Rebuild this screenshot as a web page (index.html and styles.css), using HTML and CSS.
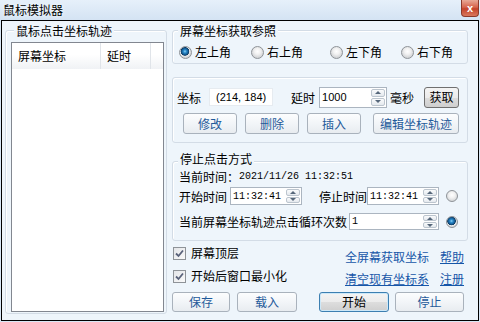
FILE: index.html
```html
<!DOCTYPE html>
<html lang="zh-CN">
<head>
<meta charset="utf-8">
<title>鼠标模拟器</title>
<link rel="stylesheet" href="styles.css">
</head>
<body>
<div class="titlebar">
  <span class="title">鼠标模拟器</span>
  <span class="close">x</span>
</div>
<div class="client">
  <div class="group left-group">
    <div class="legend">鼠标点击坐标轨迹</div>
    <div class="list">
      <div class="list-head">
        <div class="col c1">屏幕坐标</div>
        <div class="col c2">延时</div>
        <div class="col c3"></div>
      </div>
    </div>
  </div>

  <div class="right">
    <div class="group g-ref">
      <div class="legend">屏幕坐标获取参照</div>
      <div class="radios">
        <label class="opt"><span class="radio on"></span>左上角</label>
        <label class="opt"><span class="radio"></span>右上角</label>
        <label class="opt"><span class="radio"></span>左下角</label>
        <label class="opt"><span class="radio"></span>右下角</label>
      </div>
    </div>

    <div class="group g-coord">
      <div class="r1">
        <span>坐标</span>
        <span class="xy">(214, 184)</span>
        <span class="lbl-delay">延时</span>
        <span class="field delay"><span class="val">1000</span><span class="spin"><i class="up"></i><i class="dn"></i></span></span>
        <span class="lbl-ms">毫秒</span>
        <button class="btn get">获取</button>
      </div>
      <div class="r2">
        <button class="btn b-edit1">修改</button>
        <button class="btn b-del">删除</button>
        <button class="btn b-ins">插入</button>
        <button class="btn b-track">编辑坐标轨迹</button>
      </div>
    </div>

    <div class="group g-stop">
      <div class="legend">停止点击方式</div>
      <div class="s1"><span>当前时间：</span><span class="mono now">2021/11/26 11:32:51</span></div>
      <div class="s2">
        <span>开始时间</span>
        <span class="field time t-start"><span class="val mono">11:32:41</span><span class="spin"><i class="up"></i><i class="dn"></i></span></span>
        <span class="lbl-stop">停止时间</span>
        <span class="field time"><span class="val mono">11:32:41</span><span class="spin"><i class="up"></i><i class="dn"></i></span></span>
        <span class="radio r-end"></span>
      </div>
      <div class="s3">
        <span>当前屏幕坐标轨迹点击循环次数</span>
        <span class="field count"><span class="val mono">1</span><span class="spin"><i class="up"></i><i class="dn"></i></span></span>
        <span class="radio on r-end"></span>
      </div>
    </div>

    <div class="opts">
      <div class="checks">
        <label class="chk"><span class="cbox"><svg width="11" height="11" viewBox="0 0 11 11"><path d="M2 5.5 L4.5 8 L9 2.5" fill="none" stroke="#59627a" stroke-width="1.8"/></svg></span>屏幕顶层</label>
        <label class="chk"><span class="cbox"><svg width="11" height="11" viewBox="0 0 11 11"><path d="M2 5.5 L4.5 8 L9 2.5" fill="none" stroke="#59627a" stroke-width="1.8"/></svg></span>开始后窗口最小化</label>
      </div>
      <div class="links">
        <a class="lnk">全屏幕获取坐标</a>
        <a class="lnk u">帮助</a>
        <a class="lnk u">清空现有坐标系</a>
        <a class="lnk u">注册</a>
      </div>
    </div>

    <div class="actions">
      <button class="btn b-save">保存</button>
      <button class="btn b-load">载入</button>
      <button class="btn b-start">开始</button>
      <button class="btn b-stop">停止</button>
    </div>
  </div>
</div>
</body>
</html>
```

FILE: styles.css
```css
* { box-sizing: border-box; }
html, body { margin: 0; padding: 0; }
body {
  width: 480px;
  height: 322px;
  overflow: hidden;
  background: #d9e7f5;
  font-family: "Noto Sans CJK SC", "Noto Sans", sans-serif;
  font-size: 12px;
  color: #000;
}

.titlebar {
  height: 20px;
  display: flex;
  align-items: flex-start;
  padding-left: 3px;
  background: linear-gradient(#e6f0fa, #d4e3f3);
}
.title { line-height: 20px; text-shadow: 0 0 4px #fff; }
.close {
  margin-left: auto;
  margin-right: 1px;
  width: 18px;
  height: 17px;
  display: flex;
  align-items: center;
  justify-content: center;
  border: 1px solid #8d3a2a;
  border-top: 0;
  border-radius: 0 0 4px 4px;
  background: linear-gradient(#e9a996, #d7644c 45%, #c4432a 55%, #d9775c);
  color: #fff;
  font: bold 11px "Liberation Sans", sans-serif;
  line-height: 1;
}

.client {
  height: 301px;
  margin: 0 1px;
  border: 1px solid #000;
  background: #eef5fb;
  display: flex;
  align-items: flex-start;
}

.group {
  border: 1px solid #d3dce6;
  border-radius: 3px;
  box-shadow: inset 1px 1px 0 #fff;
}
.legend {
  width: fit-content;
  padding: 0 2px;
  background: #eef5fb;
  line-height: 14px;
  margin-top: -7px;
  margin-left: 5px;
}

/* left list group */
.left-group {
  margin: 9px 0 0 3px;
  width: 162px;
  height: 284px;
}
.left-group .legend { margin-left: 8px; }
.list {
  margin: 4px 0 0 5px;
  width: 153px;
  height: 270px;
  border: 1px solid #828790;
  background: #fff;
}
.list-head {
  display: flex;
  height: 26px;
  background: linear-gradient(#fff 0, #fff 45%, #f0f2f5 100%);
}
.col {
  line-height: 25px;
  padding-left: 6px;
  border-right: 1px solid #e0e4e9;
}
.c1 { width: 89px; }
.c2 { width: 50px; }
.c3 { flex: 1; border-right: 0; }

/* right column */
.right {
  margin-left: 5px;
  width: 296px;
  display: flex;
  flex-direction: column;
}

.g-ref { margin-top: 9px; height: 34px; }
.radios {
  display: grid;
  grid-template-columns: 72px 79px 71px auto;
  margin-top: 6px;
  padding-left: 6px;
  line-height: 16px;
}
.opt { display: flex; align-items: center; }
.radio {
  display: inline-block;
  flex: none;
  width: 13px;
  height: 13px;
  margin-right: 3px;
  border-radius: 50%;
  border: 1px solid #8e9398;
  background: radial-gradient(circle at 50% 40%, #ffffff 0, #f1f1f1 3px, #d4d6d8 6px);
}
.radio.on {
  background: radial-gradient(circle at 45% 40%, #8fd3f6 0, #2b8ccc 1.5px, #17609a 3px, #0d3b62 4px, #e9ebed 4.6px, #d4d6d8 6px);
}

.g-coord { margin-top: 13px; height: 66px; }
.r1 {
  display: flex;
  align-items: center;
  height: 22px;
  margin-top: 8px;
  padding-left: 4px;
}
.xy {
  width: 64px;
  height: 18px;
  margin-left: 8px;
  padding-left: 6px;
  background: #fff;
  border: 1px solid #e6ebf0;
  font: 11px "Liberation Sans", sans-serif;
  line-height: 16px;
}
.lbl-delay { margin-left: 18px; }
.field {
  display: flex;
  align-items: stretch;
  background: #fff;
  border: 1px solid #abb5c0;
}
.val { align-self: center; }
.delay {
  width: 68px;
  height: 21px;
  margin-left: 4px;
  padding-left: 2px;
  font: 11px "Liberation Sans", sans-serif;
}
.lbl-ms { margin-left: 3px; }
.spin {
  margin-left: auto;
  width: 15px;
  display: flex;
  flex-direction: column;
  gap: 1px;
  padding: 1px 1px 1px 0;
}
.spin i {
  flex: 1;
  display: flex;
  align-items: center;
  justify-content: center;
  border: 1px solid #bcc5ce;
  border-radius: 2px;
  background: linear-gradient(#fafbfc, #e4e9ee);
}
.spin .up::after {
  content: "";
  border-left: 3px solid transparent;
  border-right: 3px solid transparent;
  border-bottom: 3px solid #56677a;
}
.spin .dn::after {
  content: "";
  border-left: 3px solid transparent;
  border-right: 3px solid transparent;
  border-top: 3px solid #56677a;
}

.btn {
  margin: 0;
  padding: 0;
  height: 21px;
  border: 1px solid #a9b2bc;
  border-radius: 3px;
  background: linear-gradient(#fcfdfe, #f2f5f8 50%, #e8ecf0);
  color: #1f5a9a;
  font-family: "Noto Sans CJK SC", sans-serif;
  font-size: 12px;
  line-height: 18px;
}
.get {
  width: 35px;
  margin-left: 10px;
  border-color: #707070;
  color: #000;
  background: linear-gradient(#f4f4f4, #ebebeb 50%, #dddddd 51%, #cfcfcf);
}
.r2 {
  display: flex;
  margin-top: 5px;
  padding-left: 10px;
  gap: 8px;
}
.r2 .btn { width: 54px; }
.r2 .b-track { width: 86px; margin-left: 4px; }

.g-stop { margin-top: 18px; height: 80px; }
.g-stop .legend { line-height: 12px; margin-top: -9px; }
.mono { font-family: "Liberation Mono", "DejaVu Sans Mono", monospace; font-size: 10px; }
.s1 {
  display: flex;
  align-items: center;
  height: 14px;
  line-height: 14px;
  margin-top: 5px;
  padding-left: 6px;
}
.s2, .s3 {
  display: flex;
  align-items: center;
  padding-left: 6px;
}
.s2 { height: 18px; margin-top: 3px; }
.s3 { height: 17px; margin-top: 8px; }
.time {
  width: 72px;
  height: 18px;
  padding-left: 2px;
}
.t-start { margin-left: 3px; }
.lbl-stop { margin-left: 17px; }
.count {
  width: 90px;
  height: 17px;
  margin-left: 2px;
  padding-left: 2px;
}
.r-end { margin-left: 7px; width: 12px; height: 12px; }

.opts {
  display: flex;
  height: 47px;
}
.checks {
  width: 173px;
  padding: 5px 0 0 1px;
  display: flex;
  flex-direction: column;
  gap: 9px;
}
.chk {
  display: flex;
  align-items: center;
  height: 14px;
  line-height: 14px;
}
.cbox {
  width: 13px;
  height: 13px;
  margin-right: 5px;
  border: 1px solid #8e9398;
  background: linear-gradient(135deg, #e3e5e8, #fafafa);
  display: flex;
  align-items: center;
  justify-content: center;
}
.links {
  padding-top: 9px;
  display: grid;
  grid-template-columns: 95px auto;
  row-gap: 6px;
  line-height: 14px;
}
.lnk { color: #1656a8; text-decoration: none; }
.lnk.u { text-decoration: underline; }

.actions {
  display: flex;
  margin-top: 4px;
}
.actions .btn { height: 20px; }
.b-save { width: 58px; }
.b-load { width: 60px; margin-left: 7px; }
.b-start {
  width: 70px;
  margin-left: 22px;
  color: #000;
  border-color: #3c7fb1;
  box-shadow: inset 0 0 0 1px #cde8f8;
  background: linear-gradient(#f4f4f4, #ebebeb 50%, #dddddd 51%, #cfcfcf);
}
.b-stop { width: 69px; margin-left: 6px; }
```
